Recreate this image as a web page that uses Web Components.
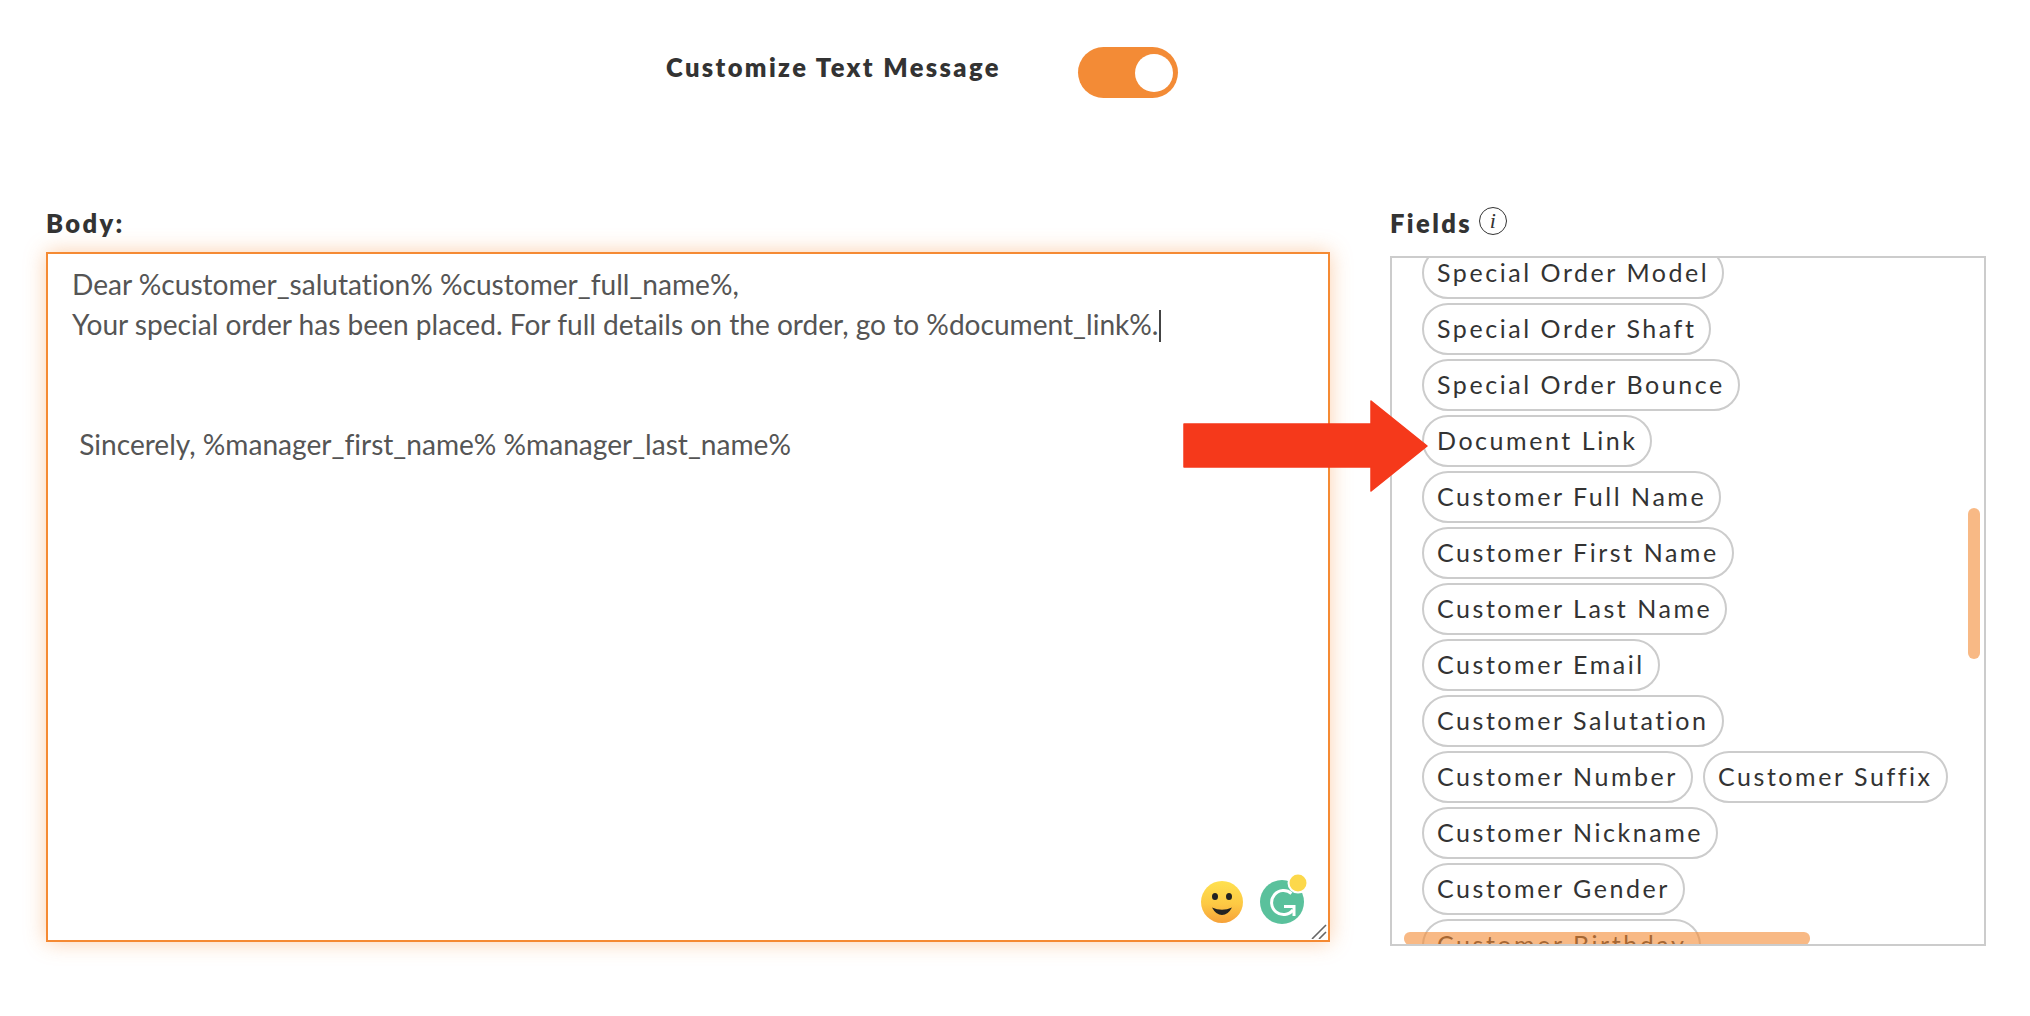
<!DOCTYPE html>
<html>
<head>
<meta charset="utf-8">
<title>Customize Text Message</title>
<style>
html, body { margin: 0; padding: 0; background: #fff; }
body { font-family: "Lato", "Liberation Sans", sans-serif; color: #333; }
</style>
</head>
<body>
<message-form></message-form>
<script>
class ToggleSwitch extends HTMLElement {
    constructor() {
        super();
        this.attachShadow({mode: "open"});
        this.shadowRoot.innerHTML = `
            <style>
                :host { display: flex; align-items: center; justify-content: flex-end; box-sizing: border-box;
                    width: 100px; height: 51px; padding-right: 5px; border-radius: 26px; background: #f38b36; }
                .knob { width: 38px; height: 38px; border-radius: 50%; background: #fff; }
            </style>
            <div class="knob"></div>
        `;
    }
}
customElements.define("toggle-switch", ToggleSwitch);

class FieldLabel extends HTMLElement {
    constructor() {
        super();
        this.attachShadow({mode: "open"});
        this.shadowRoot.innerHTML = `
            <style>
                :host { display: flex; align-items: center; gap: 7px; height: 30px;
                    font: 800 25.5px "Lato", sans-serif; letter-spacing: 2.38px; color: #333; }
            </style>
            <slot></slot>
        `;
    }
}
customElements.define("field-label", FieldLabel);

class FieldChip extends HTMLElement {
    constructor() {
        super();
        this.attachShadow({mode: "open"});
        this.shadowRoot.innerHTML = `
            <style>
                :host { display: inline-flex; align-items: center; box-sizing: border-box; height: 52px; padding: 0 13px 2px;
                    border: 2px solid #ccc; border-radius: 26px; background: #fff;
                    font: 400 25px "Lato", sans-serif; letter-spacing: 2.55px; color: #333; white-space: nowrap; }
            </style>
            <slot></slot>
        `;
    }
}
customElements.define("field-chip", FieldChip);

class FieldList extends HTMLElement {
    constructor() {
        super();
        this.attachShadow({mode: "open"});
        this.shadowRoot.innerHTML = `
            <style>
                :host { display: block; position: relative; box-sizing: border-box; width: 596px; height: 690px;
                    margin-top: 18px; border: 2px solid #ccc; overflow: hidden; }
                .chips { display: flex; flex-wrap: wrap; align-content: flex-start; gap: 4px 10px;
                    margin-top: -11px; padding: 0 32px 0 30px; }
                .bar { position: absolute; background: rgba(243, 139, 51, .6); }
                .v { right: 4px; top: 250px; width: 12px; height: 151px; border-radius: 6px; }
                .h { left: 12px; bottom: -1px; width: 406px; height: 13px; border-radius: 6px; }
            </style>
            <div class="chips"><slot></slot></div>
            <div class="bar v"></div>
            <div class="bar h"></div>
        `;
    }
}
customElements.define("field-list", FieldList);

class MessageEditor extends HTMLElement {
    constructor() {
        super();
        this.attachShadow({mode: "open"});
        this.shadowRoot.innerHTML = `
            <style>
                :host { display: block; position: relative; box-sizing: border-box; width: 1284px; height: 690px;
                    margin-top: 14px; padding: 10px 24px; border: 2px solid #f58a33;
                    box-shadow: 0 0 20px rgba(245, 138, 51, .4);
                    font: 400 28.1px/40px "Lato", sans-serif; font-variant-ligatures: none; color: #555; background: #fff; }
                svg { position: absolute; }
                .smile { right: 85px; bottom: 17px; }
                .gram { right: 18px; bottom: 16px; }
                .grip { right: 1px; bottom: 1px; }
            </style>
            <slot></slot>
            <svg class="smile" width="42" height="42" viewBox="0 0 42 42">
                <defs><linearGradient id="sun" x1="0" y1="0" x2="0" y2="1">
                    <stop offset="0" stop-color="#ffe14f"/><stop offset=".55" stop-color="#fdc944"/><stop offset="1" stop-color="#f6a139"/>
                </linearGradient></defs>
                <circle cx="21" cy="21" r="21" fill="url(#sun)"/>
                <ellipse cx="14" cy="15.5" rx="3" ry="3.6" fill="#222"/>
                <ellipse cx="28" cy="15.5" rx="3" ry="3.6" fill="#222"/>
                <path d="M11 26.5 Q21 31 31 26.5 Q27 34 21 34 Q15 34 11 26.5Z" fill="#222"/>
            </svg>
            <svg class="gram" width="50" height="50" viewBox="0 0 50 50">
                <circle cx="22" cy="28" r="22" fill="#5ac19c"/>
                <path d="M31.5 19.5 A12 12 0 1 0 33 36" fill="none" stroke="#fff" stroke-width="3"/>
                <path d="M24 32.5 H34 V42" fill="none" stroke="#fff" stroke-width="3"/>
                <circle cx="38" cy="9" r="10.5" fill="#fff"/>
                <circle cx="38" cy="9" r="8.5" fill="#fcd84b"/>
            </svg>
            <svg class="grip" width="18" height="18" viewBox="0 0 18 18">
                <path d="M3 18 L17 4 M10 18 L17 11" stroke="#666" stroke-width="1.6" fill="none"/>
            </svg>
        `;
    }
}
customElements.define("message-editor", MessageEditor);

class CalloutArrow extends HTMLElement {
    constructor() {
        super();
        this.attachShadow({mode: "open"});
        this.shadowRoot.innerHTML = `
            <style>
                :host { display: block; position: absolute; left: 1183px; top: 400px; width: 246px; height: 92px; }
            </style>
            <svg width="246" height="92" viewBox="0 0 246 92">
                <path d="M1 24 H188 V1 L244 46 L188 91 V67 H1 Z" fill="#f5391b" stroke="#f5391b" stroke-width="1.5" stroke-linejoin="round"/>
            </svg>
        `;
    }
}
customElements.define("callout-arrow", CalloutArrow);

class MessageForm extends HTMLElement {
    constructor() {
        super();
        this.attachShadow({mode: "open"});
        this.shadowRoot.innerHTML = `
            <style>
                :host { display: block; position: relative; height: 1016px; box-sizing: border-box; padding: 47px 0 0 46px; }
                .head { display: flex; align-items: center; gap: 77px; padding-left: 620px;
                    font: 800 25.5px "Lato", sans-serif; letter-spacing: 2.38px; color: #333; }
                .head span { position: relative; top: -6px; }
                .cols { display: flex; gap: 60px; margin-top: 110px; }
                .info { display: inline-flex; align-items: center; justify-content: center; box-sizing: border-box;
                    width: 28px; height: 28px; margin-top: -4px; border: 1.4px solid #333; border-radius: 50%;
                    font: italic 400 22px "Liberation Serif", serif; letter-spacing: 0; }
                .line { height: 40px; white-space: pre; }
                .gap { height: 80px; }
                .caret { display: inline-block; width: 2px; height: 32px; margin-left: 1px; background: #444; vertical-align: -7px; }
            </style>
            <div class="head"><span>Customize Text Message</span><toggle-switch></toggle-switch></div>
            <div class="cols">
                <section>
                    <field-label>Body:</field-label>
                    <message-editor>
                        <div class="line">Dear %customer_salutation% %customer_full_name%,</div>
                        <div class="line">Your special order has been placed. For full details on the order, go to %document_link%.<span class="caret"></span></div>
                        <div class="gap"></div>
                        <div class="line"> Sincerely, %manager_first_name% %manager_last_name%</div>
                    </message-editor>
                </section>
                <section>
                    <field-label>Fields <span class="info">i</span></field-label>
                    <field-list>
                        <field-chip>Special Order Model</field-chip>
                        <field-chip>Special Order Shaft</field-chip>
                        <field-chip>Special Order Bounce</field-chip>
                        <field-chip>Document Link</field-chip>
                        <field-chip>Customer Full Name</field-chip>
                        <field-chip>Customer First Name</field-chip>
                        <field-chip>Customer Last Name</field-chip>
                        <field-chip>Customer Email</field-chip>
                        <field-chip>Customer Salutation</field-chip>
                        <field-chip>Customer Number</field-chip>
                        <field-chip>Customer Suffix</field-chip>
                        <field-chip>Customer Nickname</field-chip>
                        <field-chip>Customer Gender</field-chip>
                        <field-chip>Customer Birthday</field-chip>
                    </field-list>
                </section>
            </div>
            <callout-arrow></callout-arrow>
        `;
    }
}
customElements.define("message-form", MessageForm);
</script>
</body>
</html>
